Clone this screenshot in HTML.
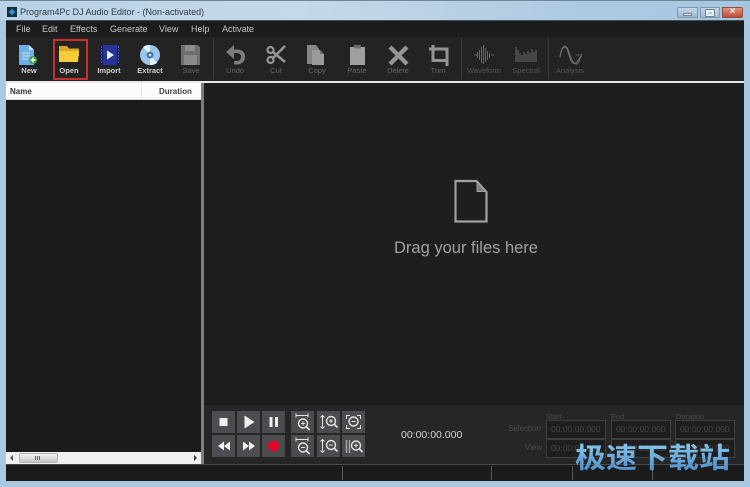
<!DOCTYPE html>
<html><head><meta charset="utf-8"><style>
html,body{margin:0;padding:0;width:750px;height:487px;overflow:hidden;background:#a9c8e2}
*{box-sizing:border-box}
body{font-family:"Liberation Sans",sans-serif;position:relative}
#w{position:absolute;left:0;top:0;width:750px;height:487px;filter:blur(.35px);background:#a9c8e2}
.a{position:absolute}
.t{position:absolute;white-space:nowrap;line-height:1}
.lab{position:absolute;top:66px;width:50px;text-align:center;font-size:7.5px;line-height:9px;color:#666}
.lb{color:#d0d0d0;font-weight:bold;font-size:7.5px;top:66px}
.m{position:absolute;top:24px;font-size:9px;line-height:10px;color:#c4c4c4}
.b{position:absolute;width:23px;height:22px;background:#4a4c50}
.b svg{position:absolute;left:0;top:0}
.tb{position:absolute;top:412px;font-size:7.5px;color:#4c4c4c;line-height:9px}
.f{position:absolute;height:19px;width:60px;border:1px solid #3f3f3f;background:#1e1e1e;color:#464646;font-size:8.5px;line-height:17px;padding-left:4px;white-space:nowrap;overflow:hidden}
</style></head><body><div id="w">
<div class="a" style="left:0;top:0;width:750px;height:20px;background:linear-gradient(90deg,#b9d2e8,#c6d9ea 40%,#afcbe3 75%,#a6c6e0)"></div>
<div class="a" style="left:0;top:0;width:750px;height:1px;background:#6f8796"></div>
<div class="a" style="left:7px;top:7px;width:10px;height:10px;background:#14303f"></div>
<div class="a" style="left:9px;top:9px;width:6px;height:6px;background:#3a8cc0;transform:rotate(45deg) scale(.8)"></div>
<div class="t" style="left:20px;top:8px;font-size:9px;color:#2e3a44">Program4Pc DJ Audio Editor - (Non-activated)</div>
<div class="a" style="left:677px;top:7px;width:66px;height:11px;overflow:hidden;border-radius:2px">
<div class="a" style="left:0;top:0;width:21px;height:11px;background:linear-gradient(#c4d6e6,#9cb6cd);border:1px solid #8198ab"></div>
<div class="a" style="left:7px;top:7px;width:7px;height:1px;background:#eef3f7;outline:1px solid #6f8498"></div>
<div class="a" style="left:23px;top:0;width:20px;height:11px;background:linear-gradient(#c4d6e6,#a4bdd3);border:1px solid #8198ab"></div>
<div class="a" style="left:29px;top:3px;width:8px;height:6px;border:2px solid #e8eff5;outline:1px solid #6f8498"></div>
<div class="a" style="left:45px;top:0;width:21px;height:11px;background:linear-gradient(#dd9480,#c04c36);border:1px solid #94503f"></div>
<div class="t" style="left:45px;top:0;width:21px;text-align:center;font-size:10px;font-weight:bold;color:#f4f0ee">×</div>
</div>

<div class="a" style="left:6px;top:20px;width:738px;height:461px;background:#1c1c1c"></div>
<div class="a" style="left:6px;top:37px;width:738px;height:44px;background:#232323"></div>
<div class="a" style="left:6px;top:20px;width:738px;height:1px;background:#3d5060"></div>
<div class="m" style="left:16px">File</div>
<div class="m" style="left:42px">Edit</div>
<div class="m" style="left:70px">Effects</div>
<div class="m" style="left:110px">Generate</div>
<div class="m" style="left:159px">View</div>
<div class="m" style="left:191px">Help</div>
<div class="m" style="left:222px">Activate</div>

<svg class="a" style="left:0;top:37px" width="750" height="44" viewBox="0 37 750 44">
<path d="M19 45h10l5 5v15H19z" fill="#6fb0e8"/><path d="M29 45v5h5z" fill="#cfe6f8"/><path d="M22 53h8M22 56h8M22 59h6" stroke="#cfe3f4" stroke-width="1"/>
<circle cx="33" cy="60" r="4" fill="#3f9e4c"/><path d="M30.500 60h5M33 57.500v5" stroke="#eaf6ea" stroke-width="1.400"/>
<path d="M59 46h8l2 2.500h10V56H59z" fill="#d8a925"/><path d="M59 62V51h20v1l-1 10z" fill="#f5cd38"/>
<rect x="100" y="45" width="20" height="20" fill="#27349a"/><path d="M100 45h3v20h-3zM117 45h3v20h-3z" fill="#151c5c"/><path d="M101 47h1M101 50h1M101 53h1M101 56h1M101 59h1M101 62h1M118 47h1M118 50h1M118 53h1M118 56h1M118 59h1M118 62h1" stroke="#8a96d8"/><path d="M107 50.500l7 4.500-7 4.500z" fill="#f0f2fa"/>
<circle cx="150" cy="55" r="10" fill="#9cc6ea"/><path d="M150 55L143 47a10 10 0 0 1 7-2zM150 55l7 8a10 10 0 0 1-7 2z" fill="#e8f2fa"/><circle cx="150" cy="55" r="3.500" fill="#3f78ae"/><circle cx="150" cy="55" r="1.300" fill="#dce9f4"/>
<path d="M181 45h17l2 2v18h-19z" fill="#6e6e6e"/><rect x="185" y="45" width="10" height="6" fill="#8d8d8d"/><rect x="184" y="55" width="13" height="10" fill="#8a8a8a"/>
<path d="M213.500 38v41M461.500 38v41M548.500 38v41" stroke="#3a3a3a"/>
<path d="M226 52l8-7v4.500h3c5 0 8 2.500 8 7s-3 8-8 8h-3v-3.500h3c2.800 0 4-1.800 4-4.200 0-2.400-1.600-3.800-4-3.800h-3V59z" fill="#7c7c7c"/>
<circle cx="270.500" cy="50" r="3" fill="none" stroke="#949494" stroke-width="2.200"/><circle cx="270.500" cy="60" r="3" fill="none" stroke="#949494" stroke-width="2.200"/><path d="M273 52l12 10M273 58l12-12" stroke="#949494" stroke-width="2.600"/>
<path d="M307 45h9l3 4v15h-12z" fill="#868686"/><path d="M312 50h8l4 4v11h-12z" fill="#9a9a9a"/><path d="M320 50v4h4z" fill="#707070"/>
<rect x="350" y="47" width="15" height="18" fill="#a0a0a0"/><rect x="354" y="45" width="7" height="3.500" fill="#6e6e6e"/>
<path d="M390 47l17 17M407 47l-17 17" stroke="#949494" stroke-width="4.400"/>
<path d="M433 45v15.500h14V49h-18M447 60.500V66" fill="none" stroke="#949494" stroke-width="3"/>
<path d="M474 55h3M477.500 52v6M479.500 50v10M481.500 47v16M483.500 45v19M485.500 48v14M487.500 51v9M489.500 53v5M491 55h3" stroke="#666" stroke-width="1" fill="none"/>
<path d="M516 47v15M518 50v12M520 53v9M522 55v7M524 52v10M526 54v8M528 51v11M530 53v9M532 49v13M534 52v10M536 50v12" stroke="#6a6a6a" stroke-width="1"/>
<path d="M560 57c2-12 6-12 8-6 2 8 4 14 8 12 3-2 3-6 6-7" fill="none" stroke="#707070" stroke-width="1.200"/><path d="M561 52c2-8 5-7 7-3 3 8 5 16 9 15 3-1 3-8 5-10M576 55h5" fill="none" stroke="#707070" stroke-width=".8"/>
</svg>

<div class="lab lb" style="left:4px">New</div>
<div class="lab lb" style="left:44px">Open</div>
<div class="lab lb" style="left:84px">Import</div>
<div class="lab lb" style="left:125px">Extract</div>
<div class="lab" style="left:166px">Save</div>
<div class="lab" style="left:210px">Undo</div>
<div class="lab" style="left:251px">Cut</div>
<div class="lab" style="left:292px">Copy</div>
<div class="lab" style="left:332px">Paste</div>
<div class="lab" style="left:373px">Delete</div>
<div class="lab" style="left:413px">Trim</div>
<div class="lab" style="left:459px;color:#555">Waveform</div>
<div class="lab" style="left:501px;color:#555">Spectral</div>
<div class="lab" style="left:545px;color:#555">Analysis</div>
<div class="a" style="left:53px;top:39px;width:35px;height:41px;border:2px solid #c8302c"></div>

<div class="a" style="left:6px;top:81px;width:738px;height:2px;background:#e8e8e8"></div>
<div class="a" style="left:6px;top:83px;width:195px;height:17px;background:#fbfbfb;border-bottom:1px solid #d8d8d8"></div>
<div class="a" style="left:141px;top:84px;width:1px;height:15px;background:#e6e6e6"></div>
<div class="t" style="left:10px;top:88px;font-size:8px;font-weight:bold;color:#333">Name</div>
<div class="t" style="left:159px;top:88px;font-size:8px;font-weight:bold;color:#444">Duration</div>
<div class="a" style="left:6px;top:100px;width:195px;height:352px;background:#1b1b1b"></div>
<div class="a" style="left:6px;top:452px;width:195px;height:12px;background:#f1f1f1"></div>
<div class="a" style="left:19px;top:453px;width:39px;height:10px;background:linear-gradient(#f2f2f2,#c8c8c8);border:1px solid #b4b4b4;border-radius:2px"></div>
<div class="a" style="left:35px;top:456px;width:6px;height:4px;background:repeating-linear-gradient(90deg,#666 0 1px,transparent 1px 2px)"></div>
<div class="a" style="left:10px;top:455px;border:3px solid transparent;border-right:3px solid #555;border-left:0"></div>
<div class="a" style="left:194px;top:455px;border:3px solid transparent;border-left:3px solid #333;border-right:0"></div>
<div class="a" style="left:201px;top:83px;width:3px;height:381px;background:#7d7d7d"></div>
<div class="a" style="left:204px;top:83px;width:540px;height:322px;background:#1e1e1e"></div>
<svg class="a" style="left:453px;top:178px" width="36" height="46"><path d="M2.500 3h21l10 11v29.500h-31z" fill="none" stroke="#a0a0a0" stroke-width="2.200"/><path d="M24 4v9.500h8.500z" fill="#808080" stroke="#a0a0a0"/></svg>
<div class="t" style="left:394px;top:239.500px;font-size:16.500px;color:#a0a0a0">Drag your files here</div>
<div class="a" style="left:204px;top:405px;width:540px;height:59px;background:#262626"></div>
<div class="b" style="left:212px;top:411px"><svg width="23" height="22"><rect x="7.500" y="7" width="8" height="8" fill="#eee"/></svg></div>
<div class="b" style="left:237px;top:411px"><svg width="23" height="22"><path d="M7.500 4.500l10 6.500-10 6.500z" fill="#eee"/></svg></div>
<div class="b" style="left:262px;top:411px"><svg width="23" height="22"><path d="M7.500 6h3v10h-3zM13 6h3v10h-3z" fill="#eee"/></svg></div>
<div class="b" style="left:212px;top:435px"><svg width="23" height="22"><path d="M6 11l6-4.500v9zM12 11l6-4.500v9z" fill="#eee"/></svg></div>
<div class="b" style="left:237px;top:435px"><svg width="23" height="22"><path d="M6 6.500l6 4.500-6 4.500zM12 6.500l6 4.500-6 4.500z" fill="#eee"/></svg></div>
<div class="b" style="left:262px;top:435px"><svg width="23" height="22"><circle cx="11.500" cy="11" r="5.500" fill="#e4062b"/></svg></div>

<div class="b" style="left:291px;top:411px"><svg width="23" height="22" fill="none" stroke="#e4e4e4"><path d="M5 4.500h12M5 2.500v4M17 2.500v4" stroke-width="1"/><circle cx="12" cy="12.500" r="4.500" stroke-width="1.400"/><path d="M15.500 16l3 3" stroke-width="1.600"/><path d="M10 12.500h4M12 10.500v4"/></svg></div>
<div class="b" style="left:317px;top:411px"><svg width="23" height="22" fill="none" stroke="#e4e4e4"><path d="M5.500 5v12M3.500 6.500l2-2 2 2M3.500 15.500l2 2 2-2"/><circle cx="14" cy="10" r="4.500" stroke-width="1.400"/><path d="M17.500 13.500l3 3" stroke-width="1.600"/><path d="M12 10h4M14 8v4"/></svg></div>
<div class="b" style="left:342px;top:411px"><svg width="23" height="22" fill="none" stroke="#e4e4e4"><circle cx="11.500" cy="10.500" r="4.500" stroke-width="1.400"/><path d="M9.500 10.500h4M4.500 8V4.500H8M15 4.500h3.500V8M4.500 14v3.500H8M15 17.500h3.500V14"/></svg></div>
<div class="b" style="left:291px;top:435px"><svg width="23" height="22" fill="none" stroke="#e4e4e4"><path d="M5 4.500h12M5 2.500v4M17 2.500v4"/><circle cx="12" cy="12.500" r="4.500" stroke-width="1.400"/><path d="M15.500 16l3 3" stroke-width="1.600"/><path d="M10 12.500h4"/></svg></div>
<div class="b" style="left:317px;top:435px"><svg width="23" height="22" fill="none" stroke="#e4e4e4"><path d="M5.500 5v12M3.500 6.500l2-2 2 2M3.500 15.500l2 2 2-2"/><circle cx="14" cy="10" r="4.500" stroke-width="1.400"/><path d="M17.500 13.500l3 3" stroke-width="1.600"/><path d="M12 10h4"/></svg></div>
<div class="b" style="left:342px;top:435px"><svg width="23" height="22" fill="none" stroke="#e4e4e4"><path d="M4.500 5v13M7.500 5v13" stroke="#aaa" stroke-width="1.400"/><circle cx="14" cy="10.500" r="4.500" stroke-width="1.400"/><path d="M17.500 14l3 3" stroke-width="1.600"/><path d="M12 10.500h4M14 8.500v4"/></svg></div>

<div class="t" style="left:401px;top:430px;font-size:10.500px;color:#d4d4d4">00:00:00.000</div>
<div class="tb" style="left:546px">Start</div>
<div class="tb" style="left:611px">End</div>
<div class="tb" style="left:676px">Duration</div>
<div class="tb" style="left:508px;top:424px;font-size:8px">Selection</div>
<div class="tb" style="left:525px;top:443px;font-size:8px">View</div>
<div class="f" style="left:546px;top:420px">00:00:00.000</div>
<div class="f" style="left:611px;top:420px">00:00:00.000</div>
<div class="f" style="left:675px;top:420px">00:00:00.000</div>
<div class="f" style="left:546px;top:439px">00:00:00.000</div>
<div class="f" style="left:611px;top:439px">00:00:00.000</div>
<div class="f" style="left:675px;top:439px">00:00:00.000</div>
<div class="a" style="left:6px;top:464px;width:738px;height:1px;background:#4a4a4a"></div>
<div class="a" style="left:6px;top:465px;width:738px;height:16px;background:#1b1b1b"></div>
<div class="a" style="left:342px;top:466px;width:1px;height:14px;background:#5a5a5a"></div>
<div class="a" style="left:491px;top:466px;width:1px;height:14px;background:#5a5a5a"></div>
<div class="a" style="left:572px;top:466px;width:1px;height:14px;background:#5a5a5a"></div>
<div class="a" style="left:652px;top:466px;width:1px;height:14px;background:#5a5a5a"></div>
<div class="t" style="left:575px;top:440px;height:34px;line-height:34px;font-size:31px;font-family:'Liberation Sans','Noto Sans CJK SC',sans-serif;font-weight:bold;color:transparent;background:linear-gradient(#86c8ea,#4a88c8);-webkit-background-clip:text;background-clip:text;transform:scaleY(.9);transform-origin:50% 100%">极速下载站</div>
</div></body></html>
